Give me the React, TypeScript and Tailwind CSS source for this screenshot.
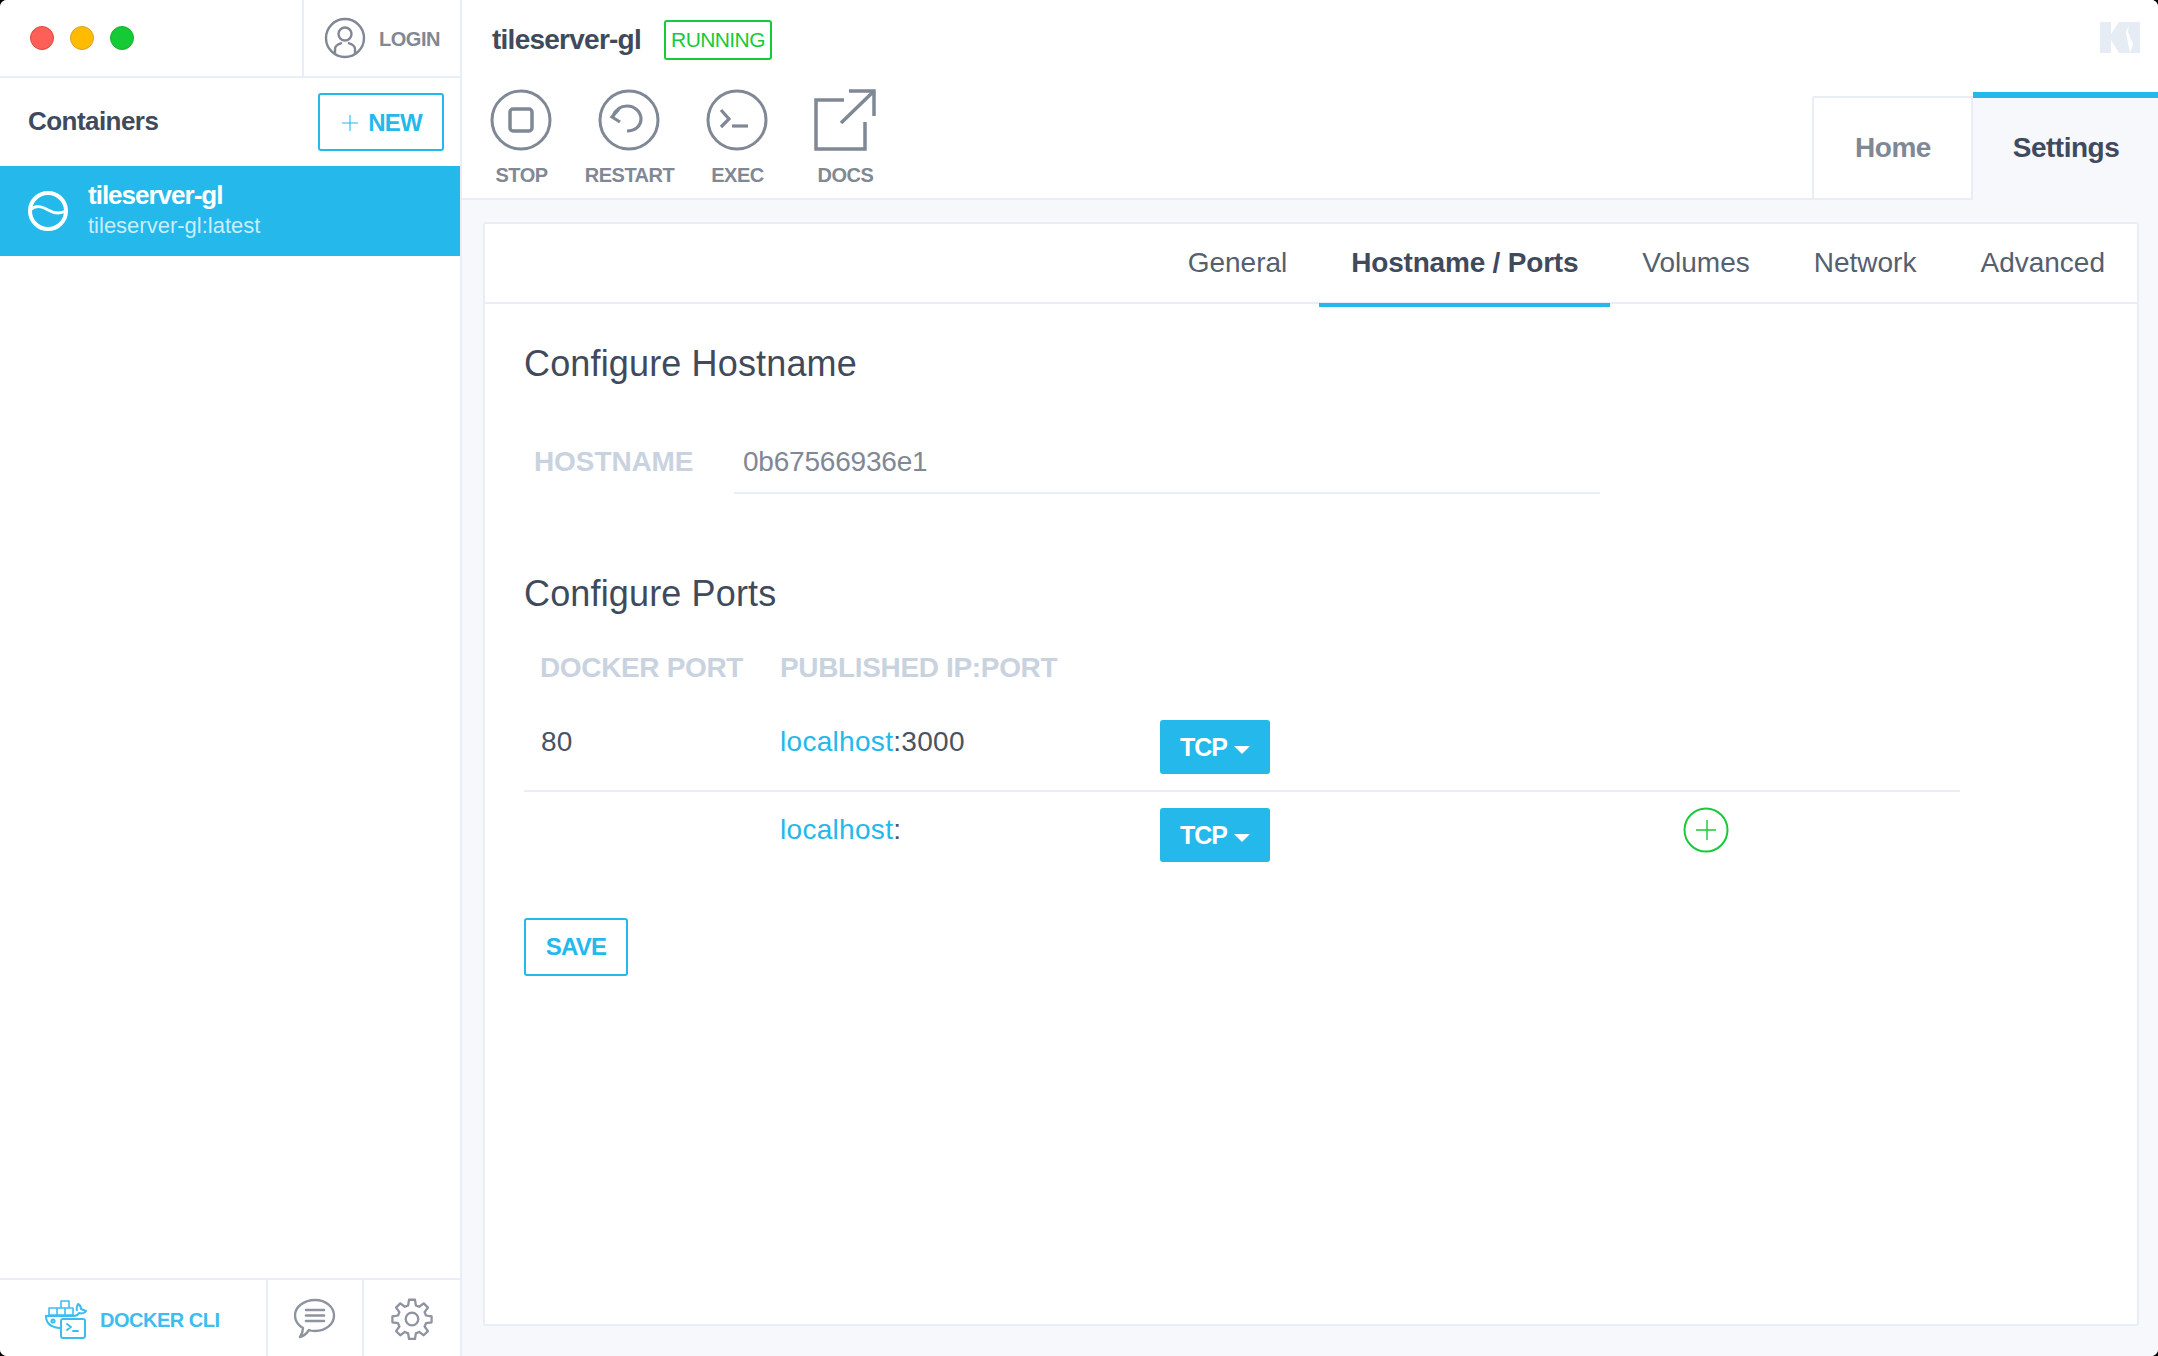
import { Plus } from "lucide-react";

const font = "font-['Liberation_Sans',Arial,sans-serif]";

function CircleIcon({ children }: { children: React.ReactNode }) {
  return (
    <svg width="62" height="62" viewBox="0 0 62 62" fill="none" stroke="#7f8894" strokeWidth="3">
      <circle cx="31" cy="31" r="29" />
      {children}
    </svg>
  );
}

function Action({ label, icon }: { label: string; icon: React.ReactNode }) {
  return (
    <div className="flex w-[108px] flex-col items-center">
      <div className="flex h-[62px] items-center justify-center">{icon}</div>
      <span className="mt-[12px] ml-px text-[20px] leading-[24px] font-bold tracking-[-0.5px] text-[#7f8894]">{label}</span>
    </div>
  );
}

function DockerIcon() {
  return (
    <svg width="42" height="40" viewBox="0 0 42 40" fill="none" stroke="#3dbdee" strokeWidth="2" strokeLinejoin="round" strokeLinecap="round">
      <path d="M12 9h8v7h-8zM20 9h8v7h-8zM16 2h8v7h-8zM4 9h8v7H4z" strokeWidth="1.6" />
      <path d="M1 17h27c3 0 5-1 6-3 3 1 6 0 7-2l-5-2c0-2-1-4-3-5-1 2-2 4-1 6" />
      <path d="M1 17c0 7 4 11 13 12h2" />
      <circle cx="8" cy="22" r="1.6" />
      <rect x="16" y="20" width="24" height="19" rx="2" fill="#fff" />
      <path d="M22 25l4 3-4 3M28 32h5" />
    </svg>
  );
}

function PortRow({ port, published, border }: { port?: string; published?: string; border?: boolean }) {
  return (
    <div className={`grid h-[86px] w-[1436px] grid-cols-[256px_380px_546px_auto] ${border ? "border-b-2 border-[#e8edf6]" : ""}`}>
      <div className="pt-[18px] pl-[17px] text-[28px] leading-[36px] tracking-[0.3px] text-[#4a5361]">{port}</div>
      <div className="pt-[18px] text-[28px] leading-[36px] tracking-[0.3px] text-[#4a5361]">
        <span className="text-[#24b8eb]">localhost</span>:{published}
      </div>
      <div className="pt-[14px]">
        <button className="flex h-[54px] w-[110px] items-center justify-center gap-[7px] rounded-[3px] bg-[#24b8eb] pt-px text-[25px] font-bold tracking-[-1px] text-white">
          TCP
          <span className="mt-[4px] h-0 w-0 border-x-[8px] border-t-[8px] border-x-transparent border-t-white" />
        </button>
      </div>
    </div>
  );
}

export default function App() {
  return (
    <div className={`h-[1356px] w-[2158px] overflow-hidden bg-black ${font}`}>
      <div className="flex h-full overflow-hidden rounded-[7px] bg-white">
        {/* Sidebar */}
        <aside className="flex w-[462px] shrink-0 flex-col border-r-2 border-[#e8edf6] bg-white">
          <div className="flex h-[78px] items-center border-b-2 border-[#e8edf6]">
            <div className="flex flex-1 items-center gap-[16px] pl-[30px]">
              <span className="size-[24px] rounded-full border border-[#e0443e] bg-[#fe5f57]" />
              <span className="size-[24px] rounded-full border border-[#dea123] bg-[#ffbb00]" />
              <span className="size-[24px] rounded-full border border-[#13b22f] bg-[#16ca35]" />
            </div>
            <div className="flex h-full w-[158px] items-center gap-[13px] border-l-2 border-[#e8edf6] pl-[20px]">
              <svg width="42" height="42" viewBox="0 0 42 42" fill="none" stroke="#7f8894" strokeWidth="2.4">
                <circle cx="21" cy="21" r="19" />
                <circle cx="21" cy="17" r="6.5" />
                <path d="M11 37v-5c0-4 4-5 7-6M31 37v-5c0-4-4-5-7-6" />
              </svg>
              <span className="pt-px text-[20px] font-bold tracking-[-0.45px] text-[#7f8894]">LOGIN</span>
            </div>
          </div>
          <div className="flex h-[88px] items-center justify-between pr-[16px] pl-[28px]">
            <span className="pb-[1px] text-[26px] font-bold tracking-[-0.55px] text-[#3f4a5c]">Containers</span>
            <button className="flex h-[58px] w-[126px] items-center justify-center gap-[5px] rounded-[3px] border-2 border-[#24b8eb] pt-[2px] pr-[3px] text-[24px] font-bold tracking-[-0.8px] text-[#24b8eb]">
              <Plus size={26} strokeWidth={1} />
              NEW
            </button>
          </div>
          <div className="flex h-[90px] items-center gap-[18px] bg-[#24b8eb] pl-[28px] text-white">
            <svg width="42" height="42" viewBox="0 0 42 42" fill="none" stroke="#fff" strokeWidth="4" className="-ml-px shrink-0">
              <circle cx="21" cy="21" r="18" />
              <path d="M3 20c6-5 11-4 18 0s12 4 18 1" strokeWidth="3" />
            </svg>
            <div className="ml-px flex flex-col">
              <span className="-mt-[1px] text-[26px] leading-[30px] font-bold tracking-[-1px]">tileserver-gl</span>
              <span className="text-[22px] leading-[31px] tracking-[0px] text-[#c8eefb]">tileserver-gl:latest</span>
            </div>
          </div>
          <div className="flex-1" />
          <div className="flex h-[78px] border-t-2 border-[#e8edf6]">
            <div className="flex w-[266px] items-center gap-[13px] pt-[1px] pl-[45px]">
              <DockerIcon />
              <span className="pt-[2px] text-[20px] font-bold tracking-[-0.5px] text-[#3dbdee]">DOCKER CLI</span>
            </div>
            <div className="flex w-[96px] items-center justify-center border-l-2 border-[#e8edf6] pt-[1px]">
              <svg width="42" height="42" viewBox="0 0 42 42" fill="none" stroke="#8d949f" strokeWidth="2.4" strokeLinecap="round" strokeLinejoin="round">
                <path d="M21 2c11 0 19 7 19 15.5S32 33 21 33c-2 0-4 0-6-1-2 3-5 6-9 7 2-3 3-6 3-9-5-3-8-7-8-12.5C1 9 10 2 21 2z" />
                <path d="M12 12h18M12 17.5h18M12 23h18" strokeWidth="2.6" />
              </svg>
            </div>
            <div className="flex flex-1 items-center justify-center border-l-2 border-[#e8edf6] pt-[1px]">
              <svg width="42" height="42" viewBox="0 0 24 24" fill="none" stroke="#8d949f" strokeWidth="1.3" strokeLinejoin="round">
                <circle cx="12" cy="12" r="3.6" />
                <path d="M10.3 1h3.400l.5 3.200 1.900.8 2.600-1.900 2.400 2.400-1.900 2.600.8 1.900 3.200.5v3.400l-3.200.5-.8 1.900 1.900 2.600-2.400 2.400-2.600-1.900-1.900.8-.5 3.200h-3.400l-.5-3.200-1.900-.8-2.600 1.900-2.400-2.400 1.900-2.600-.8-1.900-3.200-.5v-3.400l3.200-.5.800-1.900-1.900-2.600 2.400-2.400 2.600 1.900 1.900-.8z" />
              </svg>
            </div>
          </div>
        </aside>

        {/* Main */}
        <main className="flex min-w-0 flex-1 flex-col bg-[#f6f8fc]">
          <header className="relative h-[200px] shrink-0 border-b-2 border-[#e8edf6] bg-white">
            <div className="flex h-[79px] items-center gap-[23px] pl-[30px]">
              <span className="text-[28px] font-bold tracking-[-0.75px] text-[#3f4a5c]">tileserver-gl</span>
              <span className="flex h-[40px] w-[108px] items-center justify-center rounded-[3px] border-2 border-[#18c93a] text-[21px] tracking-[-0.6px] text-[#18c93a]">RUNNING</span>
            </div>
            <div className="flex pt-[10px] pl-[5px]">
              <Action
                label="STOP"
                icon={
                  <CircleIcon>
                    <rect x="20" y="20" width="22" height="22" rx="3" strokeWidth="3.5" />
                  </CircleIcon>
                }
              />
              <Action
                label="RESTART"
                icon={
                  <CircleIcon>
                    <path d="M15 27C18 20 23 17 29 17C37 17 43 23 43 30C43 37 37 42 29 42" strokeWidth="3.2" />
                    <path d="M21 20L14 28L22 33" strokeWidth="3.2" />
                  </CircleIcon>
                }
              />
              <Action
                label="EXEC"
                icon={
                  <CircleIcon>
                    <path d="M15 21l8 9-8 8" strokeWidth="3.2" />
                    <path d="M26 37h16" strokeWidth="3.2" />
                  </CircleIcon>
                }
              />
              <Action
                label="DOCS"
                icon={
                  <svg width="62" height="62" viewBox="0 0 62 62" fill="none" stroke="#7f8894" strokeWidth="3.5">
                    <path d="M30 11H2v49h49V33" />
                    <path d="M27 34L60 2M35 2h25v25" />
                  </svg>
                }
              />
            </div>

            <svg width="40" height="31" viewBox="0 0 40 31" className="absolute top-[22px] right-[18px]" fill="#e6ecf4">
              <path d="M0 0h11v12L19 0h11l-4 10 4 21H19l-8-13v13H0zM29 0h11v31H30l3-9-5-12z" />
            </svg>

            <div className="absolute right-0 bottom-[-2px] flex items-end">
              <div className="flex h-[104px] w-[161px] items-center justify-center rounded-tl-[2px] border-2 border-[#e8edf6] bg-white pl-[1px] text-[28px] font-bold tracking-[-0.5px] text-[#7f8894]">
                Home
              </div>
              <div className="flex h-[108px] w-[185px] items-center justify-center border-t-[6px] border-[#24b8eb] bg-[#f6f8fc] pb-[3px] pl-[1px] text-[28px] font-bold tracking-[-0.5px] text-[#3f4a5c]">
                Settings
              </div>
            </div>
          </header>

          <div className="flex flex-1 flex-col pt-[22px] pr-[19px] pb-[30px] pl-[21px]">
            <section className="flex-1 rounded-[3px] border-2 border-[#e8edf6] bg-white">
              <nav className="flex h-[80px] justify-end border-b-2 border-[#e8edf6] text-[28px] tracking-[0px] text-[#55606f]">
                <div className="flex h-[80px] items-center px-[32px] pb-[2px]">General</div>
                <div className="flex h-[83px] items-center border-b-[4px] border-[#24b8eb] px-[32px] pb-[1px] font-bold tracking-[-0.2px] text-[#3f4a5c]">Hostname / Ports</div>
                <div className="flex h-[80px] items-center px-[32px] pb-[2px]">Volumes</div>
                <div className="flex h-[80px] items-center px-[32px] pb-[2px]">Network</div>
                <div className="flex h-[80px] items-center px-[32px] pb-[2px]">Advanced</div>
              </nav>

              <div className="pt-[38px] pl-[39px]">
                <h2 className="text-[36px] leading-[44px] tracking-[0.15px] text-[#3f4a5c]">Configure Hostname</h2>
                <div className="mt-[38px] flex h-[70px] w-[1222px] items-center pl-[10px]">
                  <label className="w-[200px] pt-[6px] text-[28px] font-bold tracking-[-0.1px] text-[#c9d3df]">HOSTNAME</label>
                  <div className="flex h-[70px] w-[866px] items-center border-b-2 border-[#e8edf6] pt-[7px] pl-[9px] text-[28px] tracking-[-0.2px] text-[#7f8894]">0b67566936e1</div>
                </div>
                <h2 className="mt-[78px] text-[36px] leading-[44px] tracking-[0.15px] text-[#3f4a5c]">Configure Ports</h2>
                <div className="mt-[34px] grid h-[36px] w-[1436px] grid-cols-[256px_auto] text-[28px] leading-[36px] font-bold tracking-[-0.35px] text-[#c9d3df]">
                  <span className="pl-[16px]">DOCKER PORT</span>
                  <span>PUBLISHED IP:PORT</span>
                </div>
                <div className="mt-[20px]">
                  <PortRow port="80" published="3000" border />
                </div>
                <div className="relative mt-[2px]">
                  <PortRow />
                  <svg width="46" height="46" viewBox="0 0 46 46" fill="none" stroke="#18c93a" className="absolute top-[13px] left-[1159px]">
                    <circle cx="23" cy="23" r="21.5" strokeWidth="2" />
                    <path d="M13 23h20M24 13v20" strokeWidth="1.4" />
                  </svg>
                </div>
                <button className="mt-[38px] flex h-[58px] w-[104px] items-center justify-center rounded-[3px] border-2 border-[#24b8eb] text-[24px] font-bold tracking-[-0.8px] text-[#24b8eb]">SAVE</button>
              </div>
            </section>
          </div>
        </main>
      </div>
    </div>
  );
}
